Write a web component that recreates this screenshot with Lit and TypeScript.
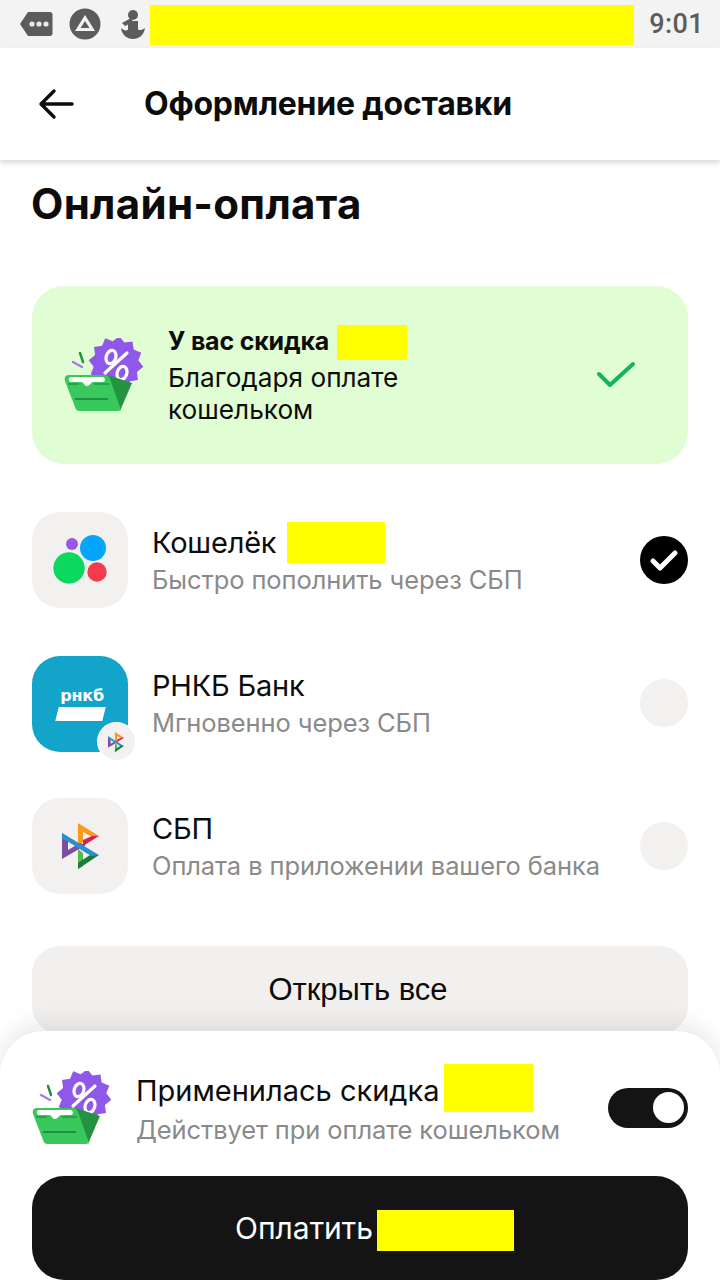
import { LitElement, html, css, svg } from "lit";
import { customElement } from "lit/decorators.js";

const sbp = (h: number) => html`<svg width=${(h * 37) / 46} height=${h} viewBox="0 0 37 46" aria-hidden="true">
  <path d="M16 0L37 13L30 14L21 9V19L16 22Z" fill="#f79a1e"/>
  <path d="M37 13L21 23V17L30 13Z" fill="#d9234f"/>
  <path d="M0 10V36L24 22L18 20L6 27V14Z" fill="#7b4ea3"/>
  <path d="M16 26V46L21 43V30Z" fill="#58b947"/>
  <path d="M37 32L16 46V40L28 32Z" fill="#1c7a3a"/>
  <path d="M0 10L37 32L29 33L5 18L0 16Z" fill="#2a8fd0"/>
</svg>`;

const starPoints = (() => {
  const pts: string[] = [];
  for (let i = 0; i < 24; i++) {
    const r = i % 2 === 0 ? 27.5 : 22.5;
    const a = (Math.PI * 2 * i) / 24 - Math.PI / 2 + 0.12;
    pts.push(`${(52 + r * Math.cos(a)).toFixed(1)},${(25.5 + r * Math.sin(a)).toFixed(1)}`);
  }
  return pts.join(" ");
})();

const gift = () => html`<svg width="82" height="76" viewBox="0 0 82 76" aria-hidden="true">
  <polygon points=${starPoints} fill="#9058e8"/>
  <g fill="none" stroke="#fff" stroke-width="3.2">
    <ellipse cx="47" cy="19" rx="4.8" ry="6.8" transform="rotate(18 47 19)"/>
    <ellipse cx="58" cy="35" rx="4.8" ry="6.8" transform="rotate(18 58 35)"/>
    <path d="M63 15L41 35" stroke-linecap="round"/>
  </g>
  <path d="M44 37L68 45L56 73Z" fill="#24933f"/>
  <path d="M5 37H40C43 37 45 38 46 41L56 69C57 72 56 73 53 73H16C13 73 12 72 11 69L1 43C0 39 2 37 5 37Z" fill="#39c85b"/>
  <path d="M7 39H39C41 39 42 44 39 44H29C27 44 26 48 23 48C20 48 20 44 17 44H7C4 44 4 39 7 39Z" fill="#fff"/>
  <path d="M4 46H15M30 46H45" stroke="#1c7d3a" stroke-width="1.2"/>
  <path d="M11 61H44" stroke="#1c7d3a" stroke-width="1.6"/>
  <path d="M16 15L19 24" stroke="#1f8f44" stroke-width="2.4" stroke-linecap="round"/>
  <path d="M9 24L18 29" stroke="#a77be8" stroke-width="2.4" stroke-linecap="round"/>
</svg>`;

@customElement("app-root")
export class AppRoot extends LitElement {
  static styles = css`
    :host { display: block; width: 720px; height: 1280px; overflow: hidden; position: relative; background: #fff; font-family: Inter, "Liberation Sans", sans-serif; color: #0c0c0c; }
    .mask { display: inline-block; background: #ffff00; vertical-align: middle; }
    .status { height: 48px; background: #f3f3f3; display: flex; align-items: center; padding: 0 16px 0 19px; box-sizing: border-box; }
    .status .ic { display: block; }
    .status .i1 { margin-right: 16px; }
    .status .i2 { margin-right: 19px; }
    .status .mask { width: 484px; height: 40px; margin-left: 4px; margin-top: 1px; }
    .time { margin-left: auto; font-family: Roboto, sans-serif; font-size: 27px; font-weight: 500; color: #5c5c5c; letter-spacing: .4px; }
    .header { height: 112px; display: flex; align-items: center; padding-left: 38px; box-shadow: 0 3px 5px rgba(0,0,0,.15); background: #fff; position: relative; box-sizing: border-box; }
    .header svg { margin-right: 70px; display: block; }
    .header h1 { margin: 0 0 2px; font-size: 32px; font-weight: 700; letter-spacing: -.2px; }
    .content { padding: 20px 32px 0; }
    h2 { margin: 0 0 0 -1px; font-size: 42px; line-height: 48px; font-weight: 700; letter-spacing: .3px; }
    .promo { margin-top: 58px; height: 178px; border-radius: 32px; background: #e1fdd3; display: flex; align-items: center; padding-left: 32px; box-sizing: border-box; }
    .promo .art { width: 82px; height: 76px; margin-right: 22px; flex: none; margin-top: 2px; }
    .promo .txt { flex: 1; align-self: flex-start; padding-top: 39px; font-size: 26.2px; line-height: 32px; }
    .promo .ttl { font-weight: 700; display: flex; align-items: center; gap: 8px; height: 35px; margin-bottom: 2px; font-size: 25px; letter-spacing: -.2px; }
    .promo .ttl span:first-child { margin-bottom: 4px; }
    .promo .ttl .mask { width: 70px; height: 35px; }
    .promo .check { margin-right: 52px; display: block; }
    .list { margin-top: 48px; display: flex; flex-direction: column; gap: 47px; }
    .row { display: flex; align-items: center; height: 96px; }
    .tile { width: 96px; height: 96px; border-radius: 28px; background: #f2f1f0; flex: none; display: flex; align-items: center; justify-content: center; position: relative; }
    .tile.bank { background: #12a5c9; flex-direction: column; color: #fff; margin-top: 2px; }
    .bank-name { font-family: "DejaVu Sans", sans-serif; font-weight: 700; font-size: 16px; line-height: 15px; margin-bottom: 4px; margin-left: 4px; letter-spacing: -.2px; }
    .bank-bar { width: 47px; height: 14px; background: #fff; transform: skewX(-14deg); }
    .badge { position: absolute; right: -7px; bottom: -8px; width: 37px; height: 37px; border-radius: 50%; background: #f2f1f0; display: flex; align-items: center; justify-content: center; box-shadow: 0 0 0 1px #fff; }
    .info { flex: 1; margin-left: 24px; align-self: flex-start; margin-top: 9px; }
    .name { font-size: 29px; line-height: 37px; display: flex; align-items: center; gap: 11px; height: 42px; letter-spacing: -.2px; }
    .name .mask { width: 98px; height: 41px; }
    .sub { font-size: 25.5px; line-height: 30px; color: #8a8a8a; letter-spacing: -.1px; margin-top: 2px; }
    .radio { width: 48px; height: 48px; border-radius: 50%; background: #f2f1f0; flex: none; display: flex; align-items: center; justify-content: center; }
    .radio.on { background: #000; }
    .open { margin-top: 52px; height: 88px; border-radius: 28px; background: #f1f0ee; display: flex; align-items: center; justify-content: center; font-family: "Liberation Sans", sans-serif; font-size: 31px; color: #0c0c0c; padding-right: 4px; box-sizing: border-box; }
    .sheet { position: absolute; left: 0; right: 0; top: 1031px; bottom: 0; background: #fff; border-radius: 44px 44px 0 0; box-shadow: 0 -8px 24px rgba(0,0,0,.09); padding: 31px 32px 0; box-sizing: border-box; }
    .sheet-row { display: flex; align-items: center; height: 87px; }
    .sheet-row .art { width: 82px; height: 76px; margin-right: 22px; flex: none; margin-top: 6px; }
    .sheet-txt { flex: 1; margin-top: -2px; }
    .sheet-ttl { font-size: 29px; display: flex; align-items: center; gap: 5px; height: 48px; }
    .sheet-ttl span:first-child { margin-top: 4px; }
    .sheet-ttl .mask { width: 89px; height: 48px; margin-left: -1px; }
    .sheet-txt .sub { margin-top: 3px; }
    .toggle { width: 80px; height: 40px; border-radius: 20px; background: #141414; position: relative; flex: none; margin-top: 5px; }
    .toggle::after { content: ""; position: absolute; right: 4px; top: 4px; width: 31px; height: 31px; border-radius: 50%; background: #fff; }
    .pay { margin-top: 27px; height: 104px; border-radius: 32px; background: #141414; color: #fff; display: flex; align-items: center; justify-content: center; gap: 4px; font-size: 30px; padding-left: 29px; box-sizing: border-box; }
    .pay .mask { width: 137px; height: 41px; margin-top: 5px; }
  `;

  render() {
    return html`
      <div class="status">
        <svg class="ic i1" width="34" height="26" viewBox="0 0 34 26" aria-hidden="true">
          <path d="M9 1H31C32.5 1 33.5 2 33.5 3.5V22.5C33.5 24 32.5 25 31 25H9L1 13Z" fill="#5c5c5c"/>
          <circle cx="13" cy="13" r="2.6" fill="#e9e9e9"/><circle cx="20" cy="13" r="2.6" fill="#e9e9e9"/><circle cx="27" cy="13" r="2.6" fill="#e9e9e9"/>
        </svg>
        <svg class="ic i2" width="32" height="32" viewBox="0 0 32 32" aria-hidden="true">
          <circle cx="16" cy="16" r="15.5" fill="#5c5c5c"/>
          <path d="M16 7L26 23H6Z M16 13L11.5 20H20.5Z" fill="#f4f4f4" fill-rule="evenodd"/>
        </svg>
        <svg class="ic" width="26" height="30" viewBox="0 0 26 30" aria-hidden="true">
          <circle cx="13" cy="6" r="5" fill="#5c5c5c"/>
          <path d="M2 14L11 9L13 13L5 17Z" fill="#5c5c5c"/>
          <path d="M8 12H18V21H8Z" fill="#5c5c5c"/>
          <path d="M1 19C4 22 7 22 9 20H17C20 22 22 21 25 19C24 26 19 30 13 30C7 30 2 26 1 19Z" fill="#5c5c5c"/>
        </svg>
        <span class="mask"></span>
        <span class="time">9:01</span>
      </div>
      <div class="header">
        <svg width="36" height="32" viewBox="0 0 36 32" aria-hidden="true"><path d="M34 16H3M16 3L3 16L16 29" fill="none" stroke="#0c0c0c" stroke-width="3.4" stroke-linecap="round" stroke-linejoin="round"/></svg>
        <h1>Оформление доставки</h1>
      </div>
      <div class="content">
        <h2>Онлайн-оплата</h2>
        <div class="promo">
          <div class="art">${gift()}</div>
          <div class="txt">
            <div class="ttl"><span>У вас скидка</span><span class="mask"></span></div>
            <div>Благодаря оплате<br />кошельком</div>
          </div>
          <svg class="check" width="40" height="30" viewBox="0 0 40 30" aria-hidden="true"><path d="M3 14L14 25L37 4" fill="none" stroke="#14b45a" stroke-width="4" stroke-linecap="round" stroke-linejoin="round"/></svg>
        </div>
        <div class="list">
          <div class="row">
            <div class="tile">
              <svg width="56" height="52" viewBox="0 0 56 52" aria-hidden="true">
                <circle cx="17" cy="34" r="15.7" fill="#0bd95f"/>
                <circle cx="41" cy="14" r="13" fill="#04a5fb"/>
                <circle cx="45" cy="38" r="9.7" fill="#f53a4c"/>
                <circle cx="20" cy="10" r="6" fill="#9a56e8"/>
              </svg>
            </div>
            <div class="info">
              <div class="name"><span>Кошелёк</span><span class="mask"></span></div>
              <div class="sub">Быстро пополнить через СБП</div>
            </div>
            <div class="radio on">
              <svg width="30" height="24" viewBox="0 0 30 24" aria-hidden="true"><path d="M4 13L11 20L26 5" fill="none" stroke="#fff" stroke-width="5" stroke-linecap="round" stroke-linejoin="round"/></svg>
            </div>
          </div>
          <div class="row">
            <div class="tile bank">
              <div class="bank-name">рнкб</div>
              <div class="bank-bar"></div>
              <div class="badge">${sbp(20)}</div>
            </div>
            <div class="info">
              <div class="name">РНКБ Банк</div>
              <div class="sub">Мгновенно через СБП</div>
            </div>
            <div class="radio"></div>
          </div>
          <div class="row">
            <div class="tile">${sbp(46)}</div>
            <div class="info">
              <div class="name">СБП</div>
              <div class="sub">Оплата в приложении вашего банка</div>
            </div>
            <div class="radio"></div>
          </div>
        </div>
        <div class="open">Открыть все</div>
      </div>
      <div class="sheet">
        <div class="sheet-row">
          <div class="art">${gift()}</div>
          <div class="sheet-txt">
            <div class="sheet-ttl"><span>Применилась скидка</span><span class="mask"></span></div>
            <div class="sub">Действует при оплате кошельком</div>
          </div>
          <div class="toggle"></div>
        </div>
        <div class="pay"><span>Оплатить</span><span class="mask"></span></div>
      </div>
    `;
  }
}
